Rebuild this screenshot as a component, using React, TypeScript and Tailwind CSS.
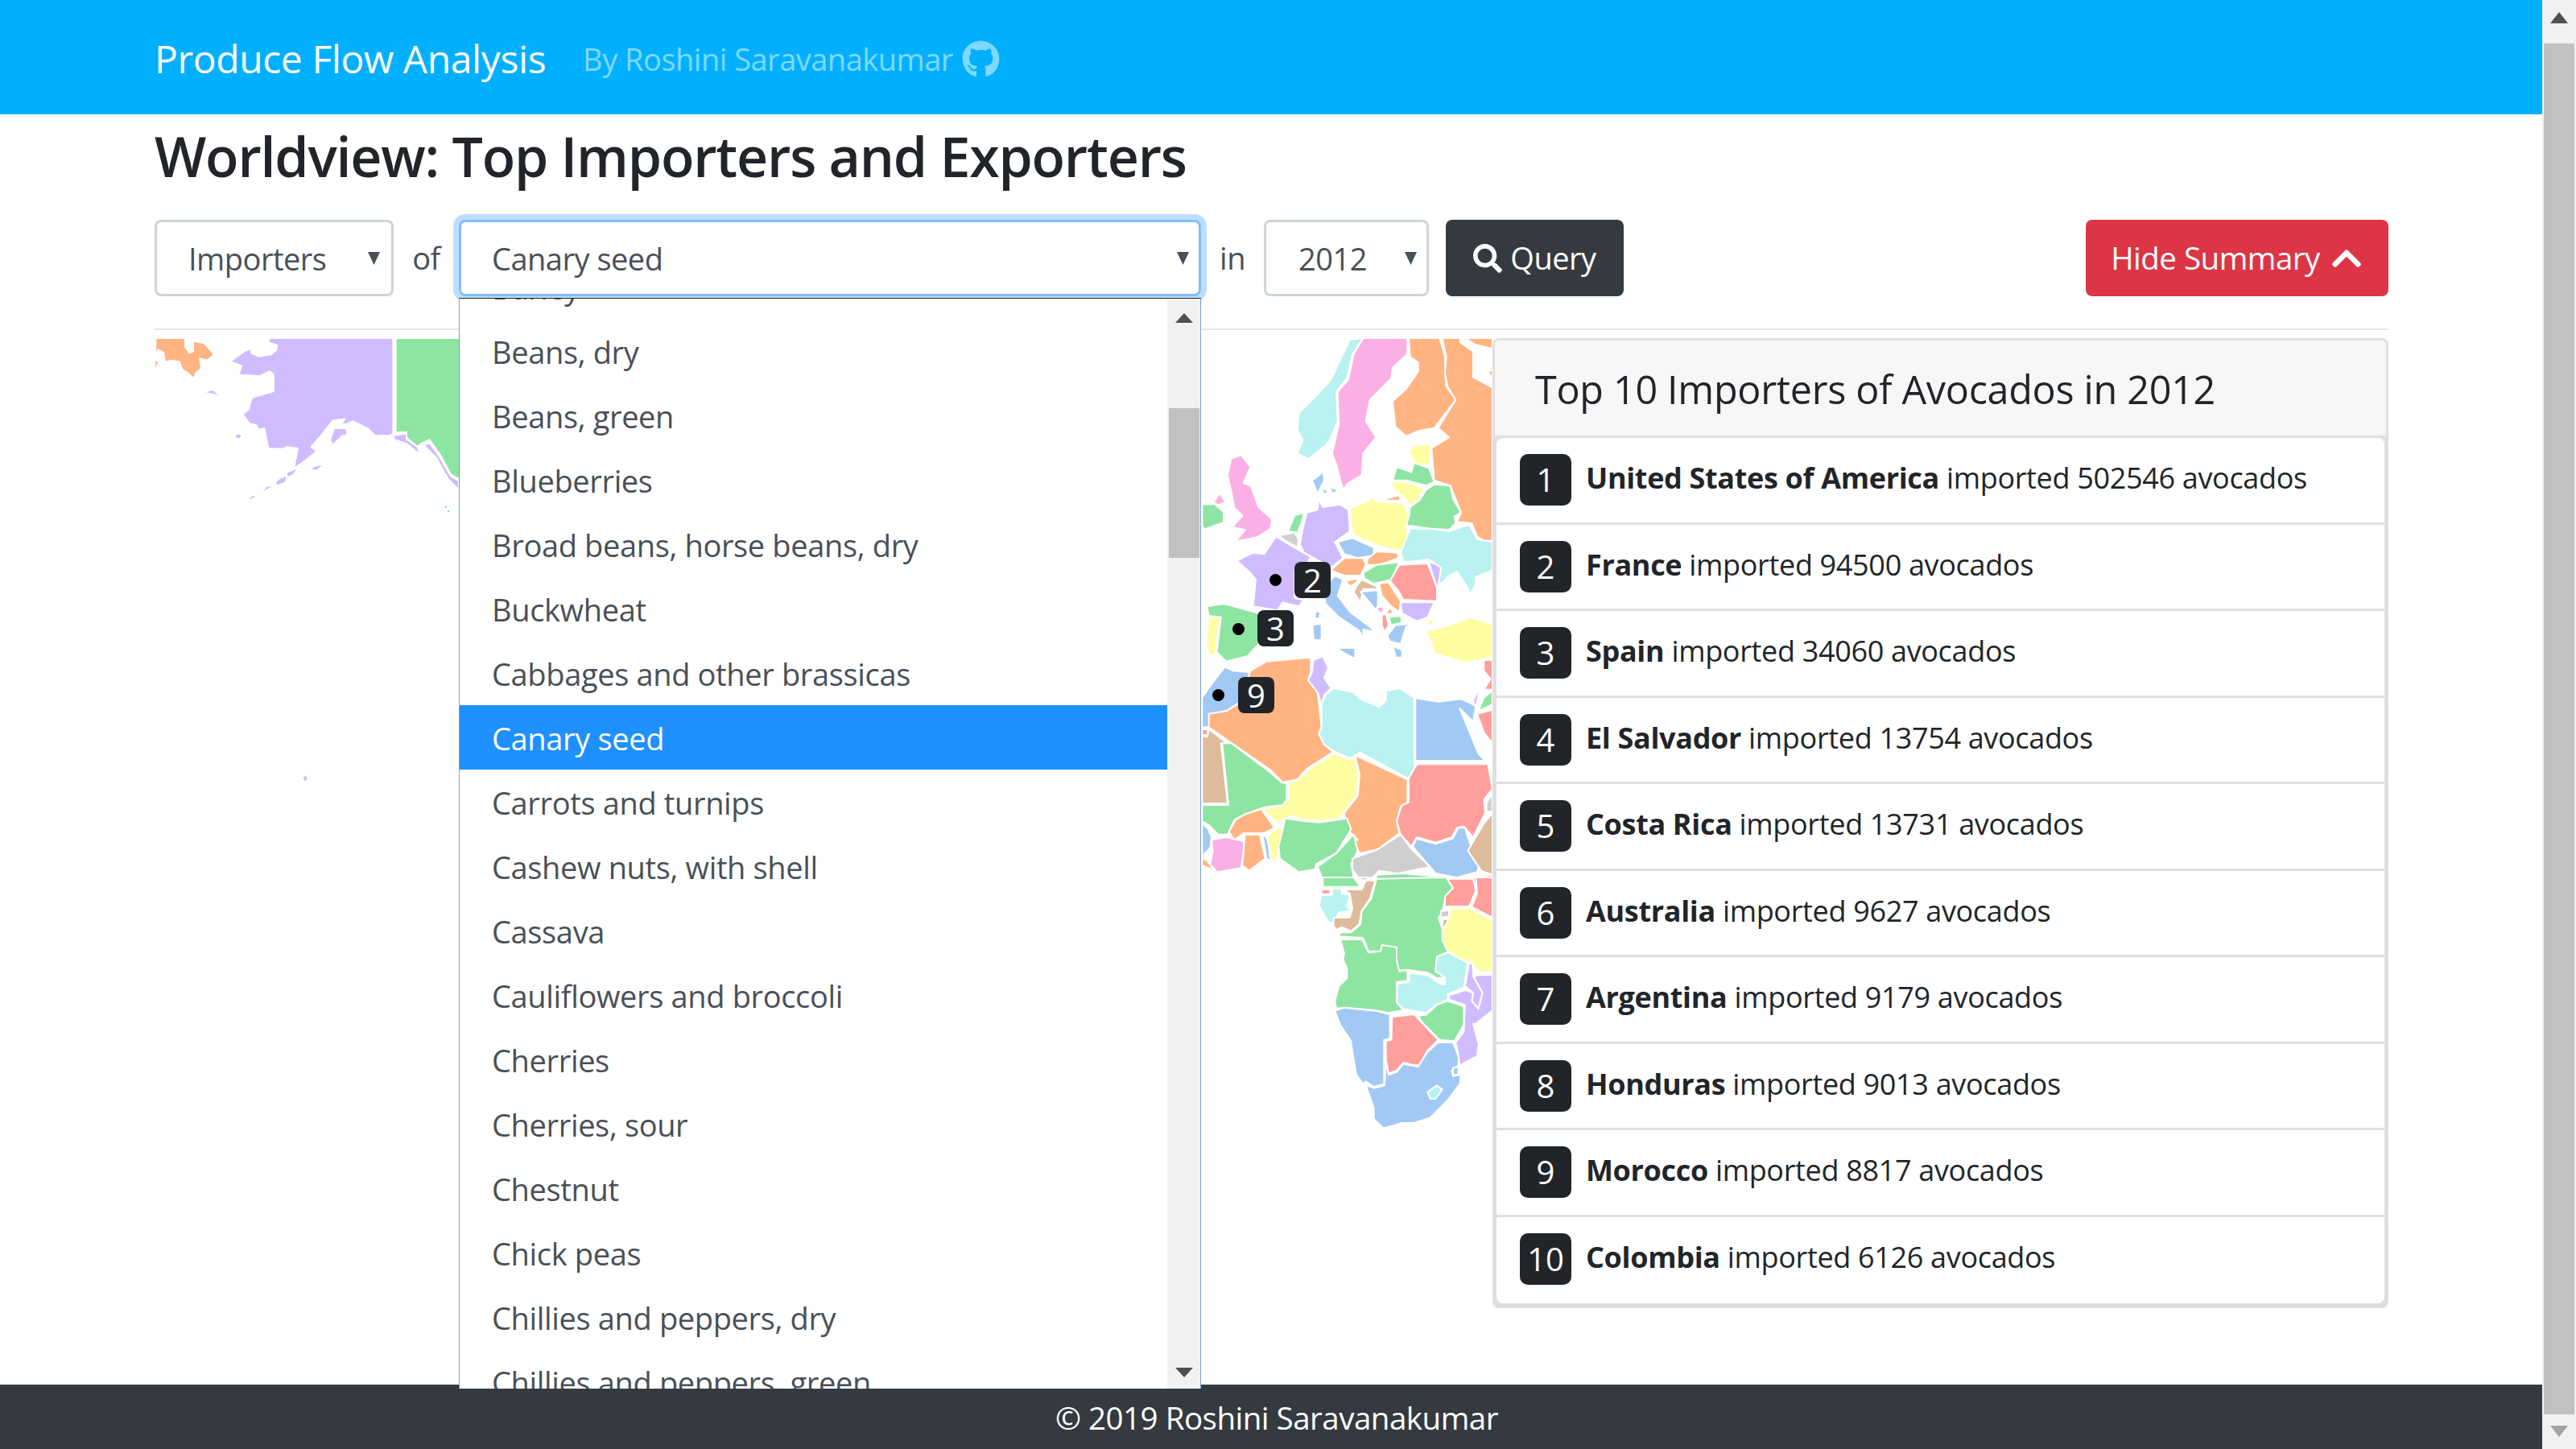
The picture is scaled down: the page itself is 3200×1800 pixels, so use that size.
import React from "react";
import { FaGithub, FaSearch, FaChevronUp } from "react-icons/fa";

const P = "#d0bbff", G = "#8de5a1", O = "#ffb482", K = "#fab0e4", Y = "#fffea3", C = "#b9f2f0", B = "#a1c9f4", R = "#ff9f9b", T = "#debb9b", A = "#cfcfcf";

type Shape = [string, string];

const alaska: Shape[] = [
  [O, "40,52 150,52 150,80 165,100 180,95 180,62 220,68 258,105 232,125 205,118 210,150 190,165 182,185 160,165 140,155 130,130 100,125 75,130 70,100 50,90 40,105"],
  [P, "318,128 370,95 400,85 395,100 425,112 470,105 490,90 493,75 462,68 462,52 925,52 925,362 915,368 860,370 830,345 775,322 755,330 730,335 745,315 700,320 660,365 620,405 640,420 590,455 555,475 570,410 530,405 515,412 460,410 445,345 425,350 415,335 390,330 365,300 385,285 400,245 440,235 480,225 480,170 465,160 430,175 350,172 360,142"],
  [P, "690,385 705,345 750,345 755,365 735,370 700,400"],
  [P, "925,368 975,362 975,380 1015,405 1030,432 1000,412 975,395 930,382"],
  [P, "1040,400 1060,392 1100,440 1140,500 1170,515 1170,545 1130,510 1085,440"],
  [G, "935,52 1260,52 1260,540 1170,510 1140,495 1100,430 1060,382 1030,395 1015,405 975,375 975,358 935,358"],
];

const alaskaIslands: Shape[] = [
  [O, "40,125 48,130 40,150"],
  [P, "336,372 350,364 360,372 348,378"],
  [P, "488,522 505,508 528,502 520,520 495,528"],
  [P, "530,490 565,478 550,495 532,502"],
  [P, "442,548 455,535 472,535 455,542"],
  [P, "388,577 400,565 412,565 400,572"],
  [P, "228,228 252,222 275,240 255,232"],
  [P, "620,475 635,470 660,465 640,480"],
  [P, "590,1478 600,1473 606,1483 594,1491"],
  [G, "1115,598 1128,598 1122,605"],
  [G, "1128,612 1134,612 1134,617 1128,617"],
];

const europe: Shape[] = [
  [C, "640,60 590,65 570,110 520,215 470,270 400,340 395,400 415,440 395,490 435,510 500,460 515,440 545,370 540,260 580,210 600,120"],
  [K, "640,60 805,60 805,120 750,170 745,210 665,290 650,370 688,430 640,490 635,570 585,600 565,625 540,530 525,490 550,380 545,260 585,215 605,120"],
  [O, "810,60 925,60 945,130 945,190 950,240 985,290 905,395 850,405 800,425 760,390 750,295 800,250 845,185 845,150 815,130"],
  [O, "935,60 1005,60 1000,75 1050,110 1050,205 1122,245 1122,815 1090,815 1065,800 1045,750 990,745 1005,710 965,610 905,590 895,470 960,430 920,395 985,290 955,240 945,190 950,130"],
  [O, "1020,60 1122,60 1122,100 1060,85"],
  [O, "1105,185 1122,178 1122,212"],
  [Y, "810,480 830,460 895,455 885,535 830,525"],
  [G, "750,590 765,540 820,560 830,525 885,545 905,595 875,610 800,590"],
  [Y, "748,595 800,595 865,620 850,660 815,685 790,650 755,630"],
  [O, "720,660 775,645 780,665 730,665"],
  [G, "815,690 850,665 875,625 905,605 965,610 975,660 1005,710 980,725 985,750 960,775 890,770 820,760 800,760 812,720"],
  [Y, "592,695 680,655 690,670 790,675 810,720 800,765 810,810 775,855 700,835 640,810 600,790 595,740"],
  [P, "475,660 490,690 555,680 585,700 590,780 535,820 565,880 520,915 420,860 405,830 415,770 430,710 470,700"],
  [G, "360,780 385,720 420,710 410,750 395,785"],
  [A, "325,795 385,785 400,810 395,840 350,815"],
  [K, "135,570 148,510 185,496 220,540 195,600 222,612 250,690 300,735 295,770 250,800 165,818 200,775 152,765 190,722 160,692 148,630"],
  [K, "82,672 105,638 128,670 100,682"],
  [G, "40,680 85,678 120,708 120,747 50,772 40,762"],
  [P, "170,890 230,860 270,865 315,800 400,850 445,875 430,900 385,925 385,1030 420,1035 400,1060 340,1045 320,1075 230,1060 240,960 215,930"],
  [G, "58,1060 120,1050 250,1085 250,1200 210,1245 130,1265 95,1230 110,1100 65,1095"],
  [Y, "65,1100 110,1100 95,1170 90,1240 65,1240 55,1190"],
  [B, "450,590 490,560 490,545 495,590 470,640"],
  [B, "545,820 600,805 680,840 680,870 620,880 570,865"],
  [O, "655,885 690,855 770,860 770,880 700,905 655,905"],
  [G, "640,935 690,905 775,895 745,960 680,975 645,955"],
  [O, "520,925 570,880 640,880 650,905 630,945 570,945"],
  [O, "575,965 625,955 610,975 590,985"],
  [B, "535,945 565,960 545,1020 590,1080 670,1140 680,1155 640,1145 640,1180 625,1150 550,1100 500,1050 495,1010 520,960"],
  [T, "615,985 635,960 690,985 695,995 640,995 630,1045 605,1005"],
  [B, "630,1005 695,1000 695,1060 685,1070"],
  [O, "700,975 735,970 780,1040 775,1080 745,1060 710,1020"],
  [R, "740,965 775,905 880,900 915,990 915,1040 790,1035 770,1000"],
  [P, "885,895 925,905 945,950 915,990"],
  [C, "780,860 815,770 890,770 960,780 1035,755 1065,810 1122,820 1122,925 1060,950 1060,975 1040,1015 1020,975 990,930 955,950 920,985 930,915 885,885 790,895"],
  [P, "780,1045 905,1045 880,1100 840,1115 785,1085"],
  [K, "690,1065 715,1060 715,1080 700,1085"],
  [O, "725,1080 745,1065 750,1085 735,1090"],
  [R, "710,1090 725,1090 735,1130 720,1155 710,1130"],
  [G, "735,1100 780,1095 785,1120 745,1130"],
  [B, "730,1170 760,1130 860,1120 800,1135 780,1200 740,1190"],
  [Y, "870,1125 895,1105 905,1130"],
  [Y, "865,1155 960,1130 1040,1100 1122,1125 1122,1250 1020,1270 905,1235 885,1170"],
];

const europeIslands: Shape[] = [
  [B, "465,1082 477,1082 474,1102 464,1102"],
  [B, "455,1132 482,1128 482,1182 458,1182"],
  [B, "550,1218 607,1218 607,1250 580,1236"],
  [B, "490,623 505,630 497,640"],
  [B, "520,620 542,628 528,636"],
  [B, "755,1213 782,1225 782,1247 765,1247"],
];

const africaN: Shape[] = [
  [B, "10,260 45,210 95,145 125,160 190,165 190,185 145,280 100,310 40,320 35,370 10,370"],
  [O, "190,160 250,125 415,110 415,165 405,195 440,240 455,370 445,395 465,435 498,462 400,525 365,565 310,575 265,530 35,370 35,320 100,310 150,280"],
  [P, "425,120 460,105 480,150 465,185 490,225 465,250 455,285 440,240 405,195 420,165"],
  [C, "500,225 575,240 600,265 670,295 695,270 695,235 745,225 800,260 800,490 805,550 775,560 600,465 560,485 505,462 465,435 445,395 455,370 455,285 470,250"],
  [B, "805,262 890,275 975,265 1030,290 1020,350 970,300 1040,470 1065,495 805,495"],
  [R, "810,508 1075,508 1092,600 1060,640 1065,690 1020,780 985,740 960,745 940,780 880,800 810,780 790,815 750,770 735,720 755,660 780,650 780,560"],
  [R, "1060,120 1092,120 1092,230 1060,230 1085,190 1060,160"],
  [R, "1035,320 1092,305 1092,430 1060,390"],
  [P, "1020,270 1045,220 1030,300"],
  [G, "1040,310 1060,260 1092,235 1092,285"],
  [T, "10,405 30,405 35,378 105,430 80,430 105,655 10,655"],
  [R, "10,378 30,378 30,400 10,400"],
  [G, "85,430 120,430 260,535 305,575 325,580 325,640 310,660 235,670 170,695 130,715 105,770 70,770 35,735 10,720 10,660 108,660"],
  [Y, "330,578 365,568 410,525 502,468 560,490 575,480 595,545 585,625 540,685 520,710 445,720 390,715 345,700 310,715 295,730 265,705 235,675 310,662 330,640"],
  [O, "580,475 775,565 775,650 750,665 735,720 745,765 665,825 600,840 560,800 590,790 550,750 540,690 590,625 597,545"],
  [O, "110,760 135,715 170,695 230,675 280,745 240,765 165,765 130,790"],
  [B, "10,730 30,745 45,780 40,820 10,850"],
  [K, "45,790 100,780 165,795 165,830 155,895 65,910 40,880 50,830"],
  [O, "10,855 30,870 55,905 10,885"],
  [O, "170,770 225,770 245,860 185,905 160,885"],
  [B, "235,770 255,785 265,870 250,860"],
  [Y, "250,775 300,740 315,770 295,820 290,870 270,870"],
  [G, "320,710 390,720 445,725 520,715 550,710 565,750 510,840 435,880 430,900 370,910 300,860 295,815"],
  [G, "575,770 590,830 565,880 575,930 600,945 465,950 440,890 510,840"],
  [A, "570,860 665,825 750,770 790,825 860,890 740,915 670,905 640,935 600,940 570,900"],
  [B, "795,815 810,785 880,805 945,785 965,745 990,745 1000,780 1040,890 1035,910 960,930 880,915"],
  [T, "1000,830 1060,730 1092,690 1092,920 1050,905"],
  [A, "1070,650 1092,620 1092,685 1070,685"],
  [G, "660,920 760,915 930,930 930,965 660,965"],
  [R, "940,935 1010,930 1020,965 940,965"],
  [R, "1020,930 1092,920 1092,965 1030,965"],
];

const africaS: Shape[] = [
  [G, "460,0 575,0 600,35 525,35 460,35"],
  [R, "455,45 487,45 487,62 455,62"],
  [C, "445,105 455,65 495,65 495,42 530,42 530,60 560,65 550,105 560,125 520,130 500,170 480,165"],
  [T, "500,180 500,150 560,150 570,115 560,60 540,45 605,45 620,12 655,12 635,80 605,125 595,175 565,200 530,185 510,195"],
  [A, "580,0 655,0 610,12"],
  [G, "660,5 920,0 945,40 915,80 905,130 890,150 905,190 905,225 930,275 885,295 880,350 915,372 885,375 850,355 780,345 740,345 730,260 680,255 675,275 630,275 610,225 520,220 525,205 565,205 600,175 605,125 640,80"],
  [R, "925,5 1020,5 1030,50 1005,108 915,108 915,70 945,40"],
  [R, "1030,0 1092,0 1092,150 1015,110 1035,60"],
  [A, "900,125 930,122 930,145 900,150"],
  [T, "908,155 930,155 915,185 905,185"],
  [Y, "935,115 1010,115 1092,160 1092,350 1050,355 1000,315 930,285 905,235 910,190 925,165"],
  [G, "525,232 605,230 630,280 675,275 680,252 735,260 735,310 745,350 775,345 775,385 735,390 735,465 760,495 705,505 655,495 540,485 510,488 505,460 520,405 550,375 550,340 535,305 540,285"],
  [C, "740,395 780,390 785,355 850,365 895,395 915,400 915,372 880,350 885,295 930,280 1000,320 985,410 925,435 925,455 880,475 845,505 790,495 760,490 735,465"],
  [P, "1005,320 1018,320 1020,370 1055,430 1045,465 1040,490 1015,460 1020,430 990,405"],
  [P, "1030,365 1092,362 1092,495 1030,545 1020,545 1040,620 1035,665 970,700 965,660 955,615 985,575 990,475 930,455 930,440 990,420 1020,430 1015,460 1040,490 1055,430 1025,375"],
  [G, "815,515 845,512 885,475 925,460 985,480 985,550 950,610 895,605 860,570 830,540"],
  [R, "718,520 800,510 860,575 890,605 850,645 820,700 800,700 760,690 735,720 705,730 695,680 695,610 715,605"],
  [B, "505,497 540,485 655,497 710,510 710,600 688,605 688,770 650,780 620,760 610,770 585,735 570,650 565,610 525,550"],
  [B, "620,775 650,785 690,775 695,690 705,735 735,725 760,695 815,705 850,650 890,615 945,615 965,665 965,700 940,720 945,740 975,735 970,770 925,830 860,895 800,915 755,915 685,935 650,900 650,860"],
  [B, "945,710 965,705 965,735 945,735"],
  [C, "850,800 885,775 905,790 880,825 860,825"],
];

function Shapes({ data, bare }: { data: Shape[]; bare?: boolean }) {
  return (
    <>
      {data.map(([fill, points], i) => (
        <polygon key={i} points={points} fill={fill} stroke={bare ? "none" : "#ffffff"} strokeWidth={2} strokeLinejoin="round" vectorEffect="non-scaling-stroke" />
      ))}
    </>
  );
}

function Caret() {
  return (
    <svg width="15" height="16" viewBox="0 0 15 16">
      <polygon points="0,0 15,0 7.5,16" fill="#495057" />
    </svg>
  );
}

function Pin({ dot, badge, label }: { dot: [number, number]; badge: [number, number]; label: string }) {
  return (
    <>
      <div className="absolute w-[15px] h-[15px] rounded-full bg-black" style={{ left: dot[0] - 192 - 7, top: dot[1] - 420 - 7 }} />
      <div className="absolute w-[45px] h-[45px] rounded-[8px] bg-[#212529] text-white text-[40px] leading-[45px] text-center" style={{ left: badge[0] - 192, top: badge[1] - 420 }}>
        {label}
      </div>
    </>
  );
}

const options = [
  "Barley", "Beans, dry", "Beans, green", "Blueberries", "Broad beans, horse beans, dry", "Buckwheat",
  "Cabbages and other brassicas", "Canary seed", "Carrots and turnips", "Cashew nuts, with shell", "Cassava",
  "Cauliflowers and broccoli", "Cherries", "Cherries, sour", "Chestnut", "Chick peas", "Chillies and peppers, dry", "Chillies and peppers, green",
];

const rows: [string, string][] = [
  ["United States of America", "502546"], ["France", "94500"], ["Spain", "34060"], ["El Salvador", "13754"], ["Costa Rica", "13731"],
  ["Australia", "9627"], ["Argentina", "9179"], ["Honduras", "9013"], ["Morocco", "8817"], ["Colombia", "6126"],
];

export default function App() {
  return (
    <div className="flex w-[3200px] h-[1800px] overflow-hidden bg-white text-[#212529] font-['Open_Sans',sans-serif]">
      <div className="w-[3158px] h-full flex flex-col">
        <nav className="h-[142px] shrink-0 bg-[#00b0ff] flex items-center pl-[192px] pt-[4px]">
          <span className="text-white text-[48px] tracking-[-0.4px]">Produce Flow Analysis</span>
          <span className="ml-[46px] text-[#80d8ff] text-[38px] tracking-[-0.5px]">By Roshini Saravanakumar</span>
          <FaGithub className="ml-[11px] text-[#80d8ff] text-[47px]" />
        </nav>
        <main className="flex-1 min-h-0 pl-[192px] pr-[191px] flex flex-col">
          <h2 className="h-[131px] pt-[12px] text-[68px] leading-[80px] font-semibold tracking-[-1.2px]">Worldview: Top Importers and Exporters</h2>
          <div className="flex items-center h-[95px] text-[38px] tracking-[-0.5px] text-[#495057]">
            <div className="w-[297px] h-[95px] shrink-0 border-[3px] border-[#ced4da] rounded-[8px] flex items-center pl-[39px] pr-[14px] justify-between">
              <span className="pt-[2px]">Importers</span>
              <Caret />
            </div>
            <span className="w-[81px] shrink-0 text-center">of</span>
            <div className="relative w-[922px] h-[95px] shrink-0 border-[3px] border-[#80bdff] rounded-[8px] shadow-[0_0_0_7px_rgba(0,123,255,0.25)] flex items-center pl-[38px] pr-[12px] justify-between bg-white">
              <span className="pt-[2px]">Canary seed</span>
              <Caret />
              <div className="absolute z-10 left-[-3px] top-[94px] w-[922px] h-[1355px] bg-white border-x border-x-[#7b9ed9] border-t border-t-[#222222] overflow-hidden flex">
                <div className="flex-1 min-w-0 -mt-[55px] tracking-[-0.35px]">
                  {options.map((o) => (
                    <div key={o} className={"h-[80px] flex items-center pl-[40px] pt-[2px] " + (o === "Canary seed" ? "bg-[#1e90ff] text-white" : "text-[#495057]")}>
                      {o}
                    </div>
                  ))}
                </div>
                <div className="w-[41px] shrink-0 bg-[#f1f1f1] flex flex-col items-center pl-[1px]">
                  <svg width="22" height="12" viewBox="0 0 22 12" className="mt-[18px]">
                    <polygon points="11,0 22,12 0,12" fill="#505050" />
                  </svg>
                  <div className="w-[38px] h-[186px] mt-[106px] bg-[#c1c1c1]" />
                  <div className="flex-1" />
                  <svg width="22" height="12" viewBox="0 0 22 12" className="mb-[14px]">
                    <polygon points="0,0 22,0 11,12" fill="#505050" />
                  </svg>
                </div>
              </div>
            </div>
            <span className="w-[78px] shrink-0 text-center">in</span>
            <div className="w-[205px] h-[95px] shrink-0 border-[3px] border-[#ced4da] rounded-[8px] flex items-center pl-[40px] pr-[12px] justify-between">
              <span className="pt-[2px]">2012</span>
              <Caret />
            </div>
            <button className="ml-[21px] w-[221px] h-[95px] shrink-0 rounded-[8px] bg-[#343a40] text-white flex items-center justify-center gap-[10px]">
              <FaSearch className="text-[36px]" />
              <span>Query</span>
            </button>
            <button className="ml-auto w-[376px] h-[95px] shrink-0 rounded-[8px] bg-[#dc3545] text-white text-[38.5px] flex items-center justify-center gap-[12px]">
              <span>Hide Summary</span>
              <FaChevronUp className="text-[42px]" />
            </button>
          </div>
          <div className="mt-[40px] h-[2px] bg-[#e6e6e6]" />
          <div className="mt-[10px] flex items-start">
            <div className="relative w-[1662px] h-[980px] overflow-hidden shrink-0">
              <svg width="1662" height="980" viewBox="192 420 1662 980" className="block">
                <g transform="translate(180 400) scale(0.33333 0.38270)"><Shapes data={alaska} /><Shapes data={alaskaIslands} bare /></g>
                <g transform="translate(1480 400) scale(0.33333)"><Shapes data={europe} /><Shapes data={europeIslands} bare /></g>
                <g transform="translate(1490 780) scale(0.33333)"><Shapes data={africaN} /></g>
                <g transform="translate(1490 1090) scale(0.33333)"><Shapes data={africaS} /></g>
              </svg>
              <Pin dot={[1584, 720]} badge={[1608, 698]} label="2" />
              <Pin dot={[1538, 781]} badge={[1562, 758]} label="3" />
              <Pin dot={[1513, 863]} badge={[1538, 841]} label="9" />
            </div>
            <div className="flex-1 min-w-0 border-[3px] border-[#dfdfdf] rounded-[8px]">
              <div className="h-[121px] bg-[#f7f7f7] border-b-[3px] border-[#dfdfdf] rounded-t-[6px] flex items-center pl-[50px] pt-[3px] text-[48.5px] font-medium tracking-[-0.3px]">
                Top 10 Importers of Avocados in 2012
              </div>
              <div className="bg-[#dfdfdf] px-[2px] pb-[3px]">
                {rows.map(([name, n], i) => (
                  <div key={name} className={"h-[107.5px] flex items-start pl-[29px] pt-[20px] bg-white " + (i < 9 ? "border-b-[3px] border-[#dfdfdf] " : "rounded-b-[8px] ") + (i === 0 ? "rounded-t-[8px]" : "")}>
                    <div className="w-[64px] h-[64px] rounded-[10px] bg-[#212529] text-white text-[40px] leading-[64px] text-center shrink-0">{i + 1}</div>
                    <div className="ml-[18px] mt-[3px] text-[36px] leading-[54px] tracking-[-0.33px]">
                      <b className="font-bold">{name}</b> imported {n} avocados
                    </div>
                  </div>
                ))}
              </div>
            </div>
          </div>
        </main>
        <footer className="h-[80px] shrink-0 bg-[#343a40] text-white text-[38.5px] tracking-[-0.5px] flex items-center justify-center pt-[3px] pl-[14px]">
          © 2019 Roshini Saravanakumar
        </footer>
      </div>
      <div className="w-[42px] h-full bg-[#f1f1f1] flex flex-col items-center">
        <svg width="22" height="14" viewBox="0 0 22 14" className="mt-[15px]">
          <polygon points="11,0 22,14 0,14" fill="#505050" />
        </svg>
        <div className="w-[38px] h-[1703px] mt-[25px] bg-[#c1c1c1]" />
        <svg width="22" height="14" viewBox="0 0 22 14" className="mt-[14px]">
          <polygon points="0,0 22,0 11,14" fill="#a3a3a3" />
        </svg>
      </div>
    </div>
  );
}
